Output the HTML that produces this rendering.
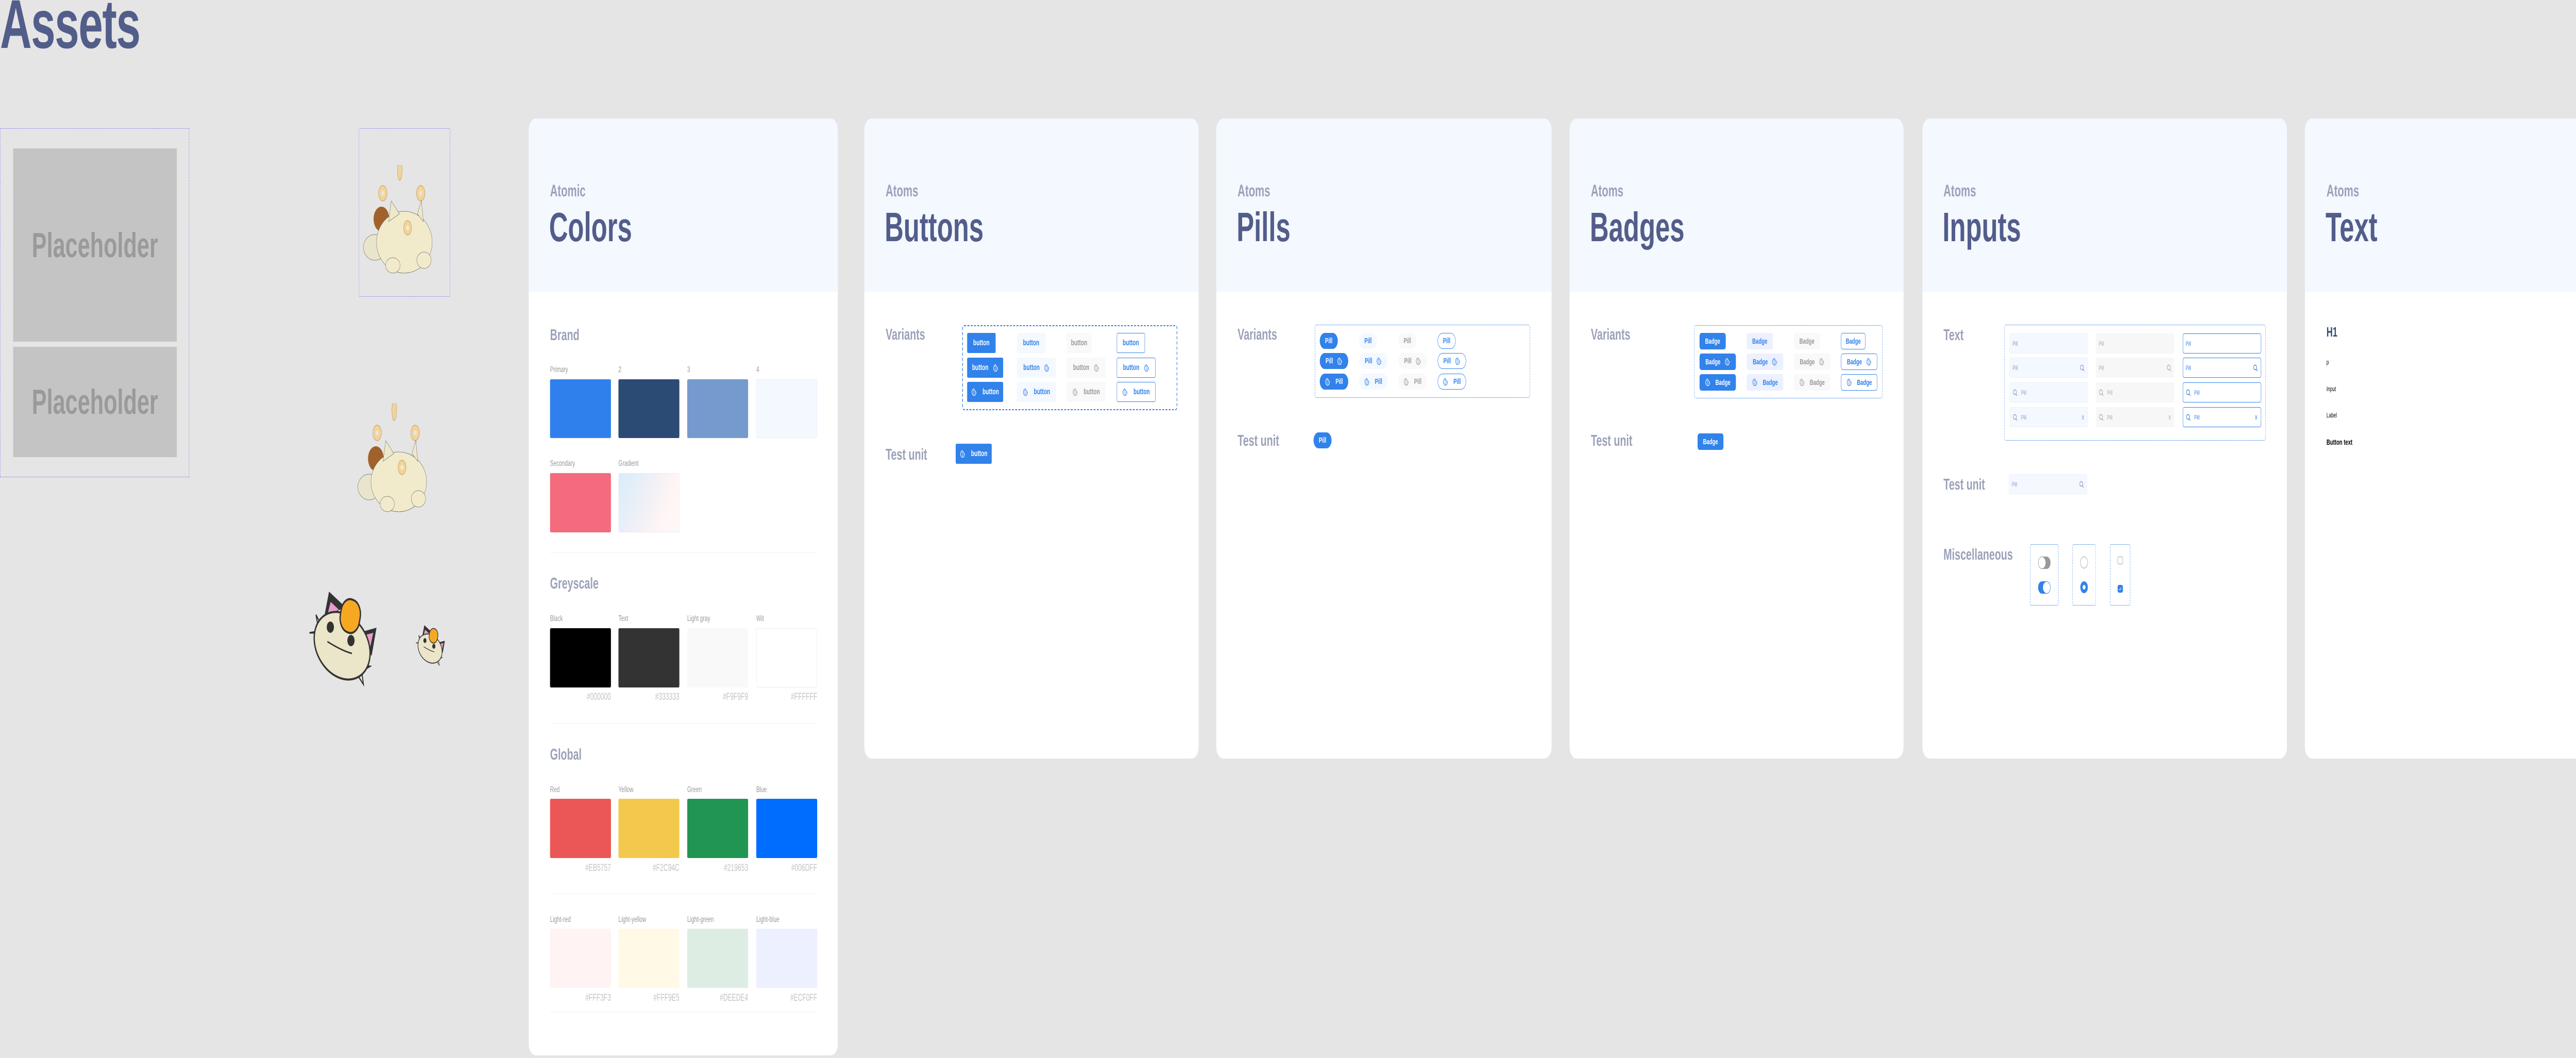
<!DOCTYPE html>
<html><head><meta charset="utf-8">
<style>
*{box-sizing:border-box;margin:0;padding:0}
html,body{margin:0;overflow:hidden;background:#e5e5e5;font-family:"Liberation Sans",Arial,sans-serif}
#root{position:absolute;left:0;top:0;width:7868px;height:2053px;overflow:hidden;transform-origin:0 0}
.a{position:absolute;white-space:nowrap}
.card{position:absolute;top:230px;background:#fff;border-radius:22px;overflow:hidden}
.hd{position:absolute;left:0;top:0;right:0;height:336px;background:#f4f8ff}
.atoms{font-size:32px;font-weight:bold;color:#9ba1b9;line-height:40px;height:40px}
.title{font-size:80px;font-weight:bold;color:#525d8a;line-height:80px}
.sec{font-size:31px;font-weight:bold;color:#9ba1b9;line-height:40px;height:40px}
.lbl{font-size:16px;color:#999;line-height:20px;height:20px}
.hex{font-size:19px;color:#c4c4c4;line-height:22px;height:22px;text-align:right;width:186px}
.sw{position:absolute;width:186px;border-radius:3px}
.div{position:absolute;height:1px;background:#eef0f8;width:816px}
.dash{position:absolute;border:2px dashed #3182ea;border-radius:6px}
.dash1{position:absolute;border:1.5px dashed #3182ea;border-radius:5px}
.b{position:absolute;display:flex;align-items:center;justify-content:center;gap:14px;font-size:16px;font-weight:bold;height:39px;border-radius:3px}
.pl{position:absolute;display:flex;align-items:center;justify-content:center;gap:13px;font-size:15px;font-weight:bold;height:31px;border-radius:16px}
.bd{position:absolute;display:flex;align-items:center;justify-content:center;gap:13px;font-size:15px;font-weight:bold;height:32px;border-radius:6px}
.p{background:#3182ea;color:#fff}
.s{background:#f4f8ff;color:#3182ea}
.sb{background:#ecf0ff;color:#3182ea}
.g{background:#f9f9f9;color:#999}
.o{background:#fff;color:#3182ea;border:1.5px solid #3182ea}
.ck{width:16px;height:16px;flex:none}
.in{position:absolute;width:239px;height:39px;border-radius:4px;display:flex;align-items:center;padding:0 8px;font-size:12px;gap:10px}
.in .sp{flex:1}
.i1{background:#f4f8ff;border:1px solid #e8effd;color:#8b9ac0}
.i2{background:#f7f7f7;color:#aaa}
.i3{background:#fff;border:1.5px solid #3182ea;color:#3182ea}
.ph{position:absolute;background:#c4c4c4;color:#9a9a9a;font-size:68px;font-weight:bold;display:flex;align-items:center;justify-content:center}
</style></head><body><div id="root">
<svg width="0" height="0" style="position:absolute;left:0;top:0">
<defs>
<symbol id="ck" viewBox="0 0 24 24"><path d="M12 2.5a9.5 9.5 0 1 0 9.5 9.5 3 3 0 0 1-3.3-3 3 3 0 0 1-3.2-3.2 3 3 0 0 1-3-3.3z" fill="none" stroke="currentColor" stroke-width="2"/><circle cx="8" cy="9" r="1.4" fill="currentColor"/><circle cx="12" cy="12" r="1.4" fill="currentColor"/><circle cx="8" cy="15" r="1.4" fill="currentColor"/><circle cx="13" cy="17" r="1.4" fill="currentColor"/><circle cx="16.5" cy="14" r="1.2" fill="currentColor"/><circle cx="11" cy="7" r="1.1" fill="currentColor"/></symbol>
<symbol id="sr" viewBox="0 0 24 24"><circle cx="10.5" cy="10.5" r="7" fill="none" stroke="currentColor" stroke-width="2.2"/><path d="M15.5 15.5l5 5" stroke="currentColor" stroke-width="2.4" stroke-linecap="round"/></symbol>
<symbol id="xx" viewBox="0 0 24 24"><path d="M6 4l12 16M18 4L6 20" stroke="currentColor" stroke-width="2.2" fill="none"/></symbol>
</defs></svg>

<div class="a" style="left:0;top:-19px;font-size:134px;font-weight:bold;color:#525d8a;line-height:134px;letter-spacing:-2px">Assets</div>

<div class="a" style="left:0;top:249px;width:578px;height:677px;border:1px dashed #8a7cf0"></div>
<div class="ph" style="left:40px;top:288px;width:500px;height:375px">Placeholder</div>
<div class="ph" style="left:40px;top:673px;width:500px;height:214px">Placeholder</div>

<div class="a" style="left:1096px;top:249px;width:279px;height:327px;border:1px dashed #8a7cf0;border-radius:3px"></div>

<svg class="a" style="left:1105px;top:320px" width="240" height="215" viewBox="0 0 240 215">
<ellipse cx="116" cy="10" rx="7" ry="20" fill="#f1d49a" stroke="#b99552"/><ellipse cx="64" cy="55" rx="13" ry="15" fill="#f3d398" stroke="#b99552"/><circle cx="64" cy="55" r="5" fill="#e5e5e5"/><ellipse cx="180" cy="55" rx="13" ry="15" fill="#f3d398" stroke="#b99552"/><circle cx="180" cy="55" r="5" fill="#e5e5e5"/>
<circle cx="60" cy="105" r="24" fill="#a0622a"/>
<ellipse cx="40" cy="160" rx="35" ry="25" fill="#e9e4cc" stroke="#666" stroke-width=".8"/>
<ellipse cx="130" cy="150" rx="85" ry="60" fill="#f1ebcc" stroke="#666" stroke-width=".8"/>
<path d="M82 110 L90 70 L115 95Z M170 95 L182 70 L188 110Z" fill="#efe8c8" stroke="#666" stroke-width=".8"/>
<ellipse cx="140" cy="122" rx="12" ry="14" fill="#f3d398" stroke="#b99552"/><circle cx="140" cy="122" r="5" fill="#f1ebcc"/>
<ellipse cx="95" cy="195" rx="22" ry="15" fill="#f1ebcc" stroke="#666" stroke-width=".8"/><ellipse cx="190" cy="185" rx="22" ry="16" fill="#f1ebcc" stroke="#666" stroke-width=".8"/>
</svg>
<svg class="a" style="left:1088px;top:782px" width="240" height="215" viewBox="0 0 240 215">
<ellipse cx="116" cy="14" rx="7" ry="20" fill="#f1d49a" stroke="#b99552"/><ellipse cx="64" cy="58" rx="13" ry="15" fill="#f3d398" stroke="#b99552"/><circle cx="64" cy="58" r="5" fill="#e5e5e5"/><ellipse cx="180" cy="58" rx="13" ry="15" fill="#f3d398" stroke="#b99552"/><circle cx="180" cy="58" r="5" fill="#e5e5e5"/>
<circle cx="60" cy="108" r="24" fill="#a0622a"/>
<ellipse cx="40" cy="163" rx="35" ry="25" fill="#e9e4cc" stroke="#666" stroke-width=".8"/>
<ellipse cx="130" cy="153" rx="85" ry="58" fill="#f1ebcc" stroke="#666" stroke-width=".8"/>
<path d="M82 113 L90 73 L115 98Z M170 98 L182 73 L188 113Z" fill="#efe8c8" stroke="#666" stroke-width=".8"/>
<ellipse cx="140" cy="125" rx="12" ry="14" fill="#f3d398" stroke="#b99552"/><circle cx="140" cy="125" r="5" fill="#f1ebcc"/>
<ellipse cx="95" cy="196" rx="22" ry="15" fill="#f1ebcc" stroke="#666" stroke-width=".8"/><ellipse cx="190" cy="186" rx="22" ry="16" fill="#f1ebcc" stroke="#666" stroke-width=".8"/>
</svg>
<svg class="a" style="left:945px;top:1143px" width="212" height="190" viewBox="0 0 212 190">
<path d="M45 55 L60 5 L110 35Z" fill="#333"/><path d="M150 85 L205 75 L190 130Z" fill="#333"/>
<path d="M55 50 L65 25 L90 40Z" fill="#e89ccb"/><path d="M165 90 L195 85 L185 115Z" fill="#e89ccb"/>
<path d="M0 85 L30 85 L20 50 L45 80Z M150 145 L185 150 L160 160 L165 185 L140 160Z" fill="#e9e3c6" stroke="#333" stroke-width="3"/>
<ellipse cx="100" cy="110" rx="88" ry="62" transform="rotate(20 100 110)" fill="#ebe5c9" stroke="#333" stroke-width="4"/>
<rect x="95" y="20" width="60" height="65" rx="28" transform="rotate(15 125 52)" fill="#f7a823" stroke="#333" stroke-width="4"/>
<circle cx="64" cy="74" r="11" fill="#333"/><circle cx="127" cy="100" r="11" fill="#333"/>
<path d="M55 102 Q100 120 130 125" fill="none" stroke="#333" stroke-width="3"/>
</svg>
<svg class="a" style="left:1264px;top:1211px" width="104" height="82" viewBox="0 0 212 190">
<path d="M45 55 L60 5 L110 35Z" fill="#333"/><path d="M150 85 L205 75 L190 130Z" fill="#333"/>
<path d="M55 50 L65 25 L90 40Z" fill="#e89ccb"/><path d="M165 90 L195 85 L185 115Z" fill="#e89ccb"/>
<path d="M0 85 L30 85 L20 50 L45 80Z M150 145 L185 150 L160 160 L165 185 L140 160Z" fill="#e9e3c6" stroke="#333" stroke-width="3"/>
<ellipse cx="100" cy="110" rx="88" ry="62" transform="rotate(20 100 110)" fill="#ebe5c9" stroke="#333" stroke-width="4"/>
<rect x="95" y="20" width="60" height="65" rx="28" transform="rotate(15 125 52)" fill="#f7a823" stroke="#333" stroke-width="4"/>
<circle cx="64" cy="74" r="11" fill="#333"/><circle cx="127" cy="100" r="11" fill="#333"/>
<path d="M55 102 Q100 120 130 125" fill="none" stroke="#333" stroke-width="3"/>
</svg>

<!-- Colors -->
<div class="card" style="left:1615px;width:944px;height:1818px"><div class="hd"></div></div>
<div class="a atoms" style="left:1680px;top:350px">Atomic</div>
<div class="a title" style="left:1677px;top:401px">Colors</div>
<div class="a sec" style="left:1680px;top:630px">Brand</div>
<div class="a lbl" style="left:1680px;top:708px">Primary</div>
<div class="a lbl" style="left:1889px;top:708px">2</div>
<div class="a lbl" style="left:2099px;top:708px">3</div>
<div class="a lbl" style="left:2310px;top:708px">4</div>
<div class="sw" style="left:1680px;top:736px;height:114px;background:#2f80ed"></div>
<div class="sw" style="left:1889px;top:736px;height:114px;background:#2b4a74"></div>
<div class="sw" style="left:2099px;top:736px;height:114px;background:#759acd"></div>
<div class="sw" style="left:2310px;top:736px;height:114px;background:#f4f8ff;border:1.5px solid #eaecf0"></div>
<div class="a lbl" style="left:1680px;top:890px">Secondary</div>
<div class="a lbl" style="left:1889px;top:890px">Gradient</div>
<div class="sw" style="left:1680px;top:918px;height:115px;background:#f46b7d"></div>
<div class="sw" style="left:1889px;top:918px;height:115px;background:linear-gradient(120deg,#d7edfb 0%,#f0f0f6 45%,#fff5f5 75%,#fff8f8 100%);border:1.5px solid #eaecf0"></div>
<div class="div" style="left:1680px;top:1072px"></div>
<div class="a sec" style="left:1680px;top:1112px">Greyscale</div>
<div class="a lbl" style="left:1680px;top:1191px">Black</div>
<div class="a lbl" style="left:1889px;top:1191px">Text</div>
<div class="a lbl" style="left:2099px;top:1191px">Light gray</div>
<div class="a lbl" style="left:2310px;top:1191px">Wit</div>
<div class="sw" style="left:1680px;top:1219px;height:115px;background:#000"></div>
<div class="sw" style="left:1889px;top:1219px;height:115px;background:#333"></div>
<div class="sw" style="left:2099px;top:1219px;height:115px;background:#f9f9f9"></div>
<div class="sw" style="left:2310px;top:1219px;height:115px;background:#fff;border:1.5px solid #eaeaea"></div>
<div class="a hex" style="left:1680px;top:1342px">#000000</div>
<div class="a hex" style="left:1889px;top:1342px">#333333</div>
<div class="a hex" style="left:2099px;top:1342px">#F9F9F9</div>
<div class="a hex" style="left:2310px;top:1342px">#FFFFFF</div>
<div class="div" style="left:1680px;top:1403px"></div>
<div class="a sec" style="left:1680px;top:1444px">Global</div>
<div class="a lbl" style="left:1680px;top:1523px">Red</div>
<div class="a lbl" style="left:1889px;top:1523px">Yellow</div>
<div class="a lbl" style="left:2099px;top:1523px">Green</div>
<div class="a lbl" style="left:2310px;top:1523px">Blue</div>
<div class="sw" style="left:1680px;top:1550px;height:115px;background:#eb5757"></div>
<div class="sw" style="left:1889px;top:1550px;height:115px;background:#f2c94c"></div>
<div class="sw" style="left:2099px;top:1550px;height:115px;background:#219653"></div>
<div class="sw" style="left:2310px;top:1550px;height:115px;background:#006dff"></div>
<div class="a hex" style="left:1680px;top:1674px">#EB5757</div>
<div class="a hex" style="left:1889px;top:1674px">#F2C94C</div>
<div class="a hex" style="left:2099px;top:1674px">#219653</div>
<div class="a hex" style="left:2310px;top:1674px">#006DFF</div>
<div class="div" style="left:1680px;top:1734px"></div>
<div class="a lbl" style="left:1680px;top:1775px">Light-red</div>
<div class="a lbl" style="left:1889px;top:1775px">Light-yellow</div>
<div class="a lbl" style="left:2099px;top:1775px">Light-green</div>
<div class="a lbl" style="left:2310px;top:1775px">Light-blue</div>
<div class="sw" style="left:1680px;top:1802px;height:115px;background:#fff3f3"></div>
<div class="sw" style="left:1889px;top:1802px;height:115px;background:#fff9e5"></div>
<div class="sw" style="left:2099px;top:1802px;height:115px;background:#deede4"></div>
<div class="sw" style="left:2310px;top:1802px;height:115px;background:#ecf0ff"></div>
<div class="a hex" style="left:1680px;top:1926px">#FFF3F3</div>
<div class="a hex" style="left:1889px;top:1926px">#FFF9E5</div>
<div class="a hex" style="left:2099px;top:1926px">#DEEDE4</div>
<div class="a hex" style="left:2310px;top:1926px">#ECF0FF</div>
<div class="div" style="left:1680px;top:1963px"></div>

<!-- Buttons -->
<div class="card" style="left:2640px;width:1021px;height:1242px"><div class="hd"></div></div>
<div class="a atoms" style="left:2705px;top:350px">Atoms</div>
<div class="a title" style="left:2702px;top:401px">Buttons</div>
<div class="a sec" style="left:2705px;top:629px">Variants</div>
<div class="dash" style="left:2939px;top:631px;width:657px;height:165px"></div>
<div class="b p" style="left:2954px;top:646px;width:87px">button</div>
<div class="b s" style="left:3106px;top:646px;width:87px">button</div>
<div class="b g" style="left:3258px;top:646px;width:76px">button</div>
<div class="b o" style="left:3411px;top:646px;width:86px">button</div>
<div class="b p" style="left:2954px;top:694px;width:110px"><span>button</span><svg class="ck"><use href="#ck"/></svg></div>
<div class="b s" style="left:3106px;top:694px;width:119px"><span>button</span><svg class="ck"><use href="#ck"/></svg></div>
<div class="b g" style="left:3258px;top:694px;width:119px"><span>button</span><svg class="ck"><use href="#ck"/></svg></div>
<div class="b o" style="left:3411px;top:694px;width:118px"><span>button</span><svg class="ck"><use href="#ck"/></svg></div>
<div class="b p" style="left:2954px;top:741px;width:110px;gap:18px"><svg class="ck"><use href="#ck"/></svg><span>button</span></div>
<div class="b s" style="left:3106px;top:741px;width:119px;gap:18px"><svg class="ck"><use href="#ck"/></svg><span>button</span></div>
<div class="b g" style="left:3258px;top:741px;width:119px;gap:18px"><svg class="ck"><use href="#ck"/></svg><span>button</span></div>
<div class="b o" style="left:3411px;top:741px;width:118px;gap:18px"><svg class="ck"><use href="#ck"/></svg><span>button</span></div>
<div class="a sec" style="left:2705px;top:862px">Test unit</div>
<div class="b p" style="left:2919px;top:861px;width:110px;gap:18px"><svg class="ck"><use href="#ck"/></svg><span>button</span></div>

<!-- Pills -->
<div class="card" style="left:3715px;width:1024px;height:1242px"><div class="hd"></div></div>
<div class="a atoms" style="left:3780px;top:350px">Atoms</div>
<div class="a title" style="left:3777px;top:401px">Pills</div>
<div class="a sec" style="left:3780px;top:629px">Variants</div>
<div class="dash1" style="left:4016px;top:630px;width:657px;height:142px"></div>
<div class="pl p" style="left:4031px;top:646px;width:55px">Pill</div>
<div class="pl s" style="left:4151px;top:646px;width:55px">Pill</div>
<div class="pl g" style="left:4271px;top:646px;width:55px">Pill</div>
<div class="pl o" style="left:4391px;top:646px;width:55px">Pill</div>
<div class="pl p" style="left:4031px;top:685px;width:87px"><span>Pill</span><svg class="ck"><use href="#ck"/></svg></div>
<div class="pl s" style="left:4151px;top:685px;width:87px"><span>Pill</span><svg class="ck"><use href="#ck"/></svg></div>
<div class="pl g" style="left:4271px;top:685px;width:87px"><span>Pill</span><svg class="ck"><use href="#ck"/></svg></div>
<div class="pl o" style="left:4391px;top:685px;width:87px"><span>Pill</span><svg class="ck"><use href="#ck"/></svg></div>
<div class="pl p" style="left:4031px;top:725px;width:87px;gap:16px"><svg class="ck"><use href="#ck"/></svg><span>Pill</span></div>
<div class="pl s" style="left:4151px;top:725px;width:87px;gap:16px"><svg class="ck"><use href="#ck"/></svg><span>Pill</span></div>
<div class="pl g" style="left:4271px;top:725px;width:87px;gap:16px"><svg class="ck"><use href="#ck"/></svg><span>Pill</span></div>
<div class="pl o" style="left:4391px;top:725px;width:87px;gap:16px"><svg class="ck"><use href="#ck"/></svg><span>Pill</span></div>
<div class="a sec" style="left:3780px;top:835px">Test unit</div>
<div class="pl p" style="left:4012px;top:839px;width:55px">Pill</div>

<!-- Badges -->
<div class="card" style="left:4794px;width:1020px;height:1242px"><div class="hd"></div></div>
<div class="a atoms" style="left:4859px;top:350px">Atoms</div>
<div class="a title" style="left:4856px;top:401px">Badges</div>
<div class="a sec" style="left:4859px;top:629px">Variants</div>
<div class="dash1" style="left:5175px;top:631px;width:575px;height:142px"></div>
<div class="bd p" style="left:5191px;top:646px;width:80px">Badge</div>
<div class="bd sb" style="left:5335px;top:646px;width:80px">Badge</div>
<div class="bd g" style="left:5479px;top:646px;width:80px">Badge</div>
<div class="bd o" style="left:5623px;top:646px;width:75px">Badge</div>
<div class="bd p" style="left:5191px;top:686px;width:111px"><span>Badge</span><svg class="ck"><use href="#ck"/></svg></div>
<div class="bd sb" style="left:5335px;top:686px;width:112px"><span>Badge</span><svg class="ck"><use href="#ck"/></svg></div>
<div class="bd g" style="left:5479px;top:686px;width:111px"><span>Badge</span><svg class="ck"><use href="#ck"/></svg></div>
<div class="bd o" style="left:5623px;top:686px;width:111px"><span>Badge</span><svg class="ck"><use href="#ck"/></svg></div>
<div class="bd p" style="left:5191px;top:726px;width:111px;gap:16px"><svg class="ck"><use href="#ck"/></svg><span>Badge</span></div>
<div class="bd sb" style="left:5335px;top:726px;width:112px;gap:16px"><svg class="ck"><use href="#ck"/></svg><span>Badge</span></div>
<div class="bd g" style="left:5479px;top:726px;width:111px;gap:16px"><svg class="ck"><use href="#ck"/></svg><span>Badge</span></div>
<div class="bd o" style="left:5623px;top:726px;width:111px;gap:16px"><svg class="ck"><use href="#ck"/></svg><span>Badge</span></div>
<div class="a sec" style="left:4859px;top:835px">Test unit</div>
<div class="bd p" style="left:5185px;top:841px;width:79px">Badge</div>

<!-- Inputs -->
<div class="card" style="left:5872px;width:1113px;height:1242px"><div class="hd"></div></div>
<div class="a atoms" style="left:5936px;top:350px">Atoms</div>
<div class="a title" style="left:5933px;top:401px">Inputs</div>
<div class="a sec" style="left:5936px;top:630px">Text</div>
<div class="dash1" style="left:6122px;top:630px;width:798px;height:225px"></div>
<div class="in i1" style="left:6138px;top:647px">Pill</div>
<div class="in i2" style="left:6402px;top:647px">Pill</div>
<div class="in i3" style="left:6667px;top:647px">Pill</div>
<div class="in i1" style="left:6138px;top:694px"><span class="sp">Pill</span><svg class="ck"><use href="#sr"/></svg></div>
<div class="in i2" style="left:6402px;top:694px"><span class="sp">Pill</span><svg class="ck"><use href="#sr"/></svg></div>
<div class="in i3" style="left:6667px;top:694px"><span class="sp">Pill</span><svg class="ck"><use href="#sr"/></svg></div>
<div class="in i1" style="left:6138px;top:742px"><svg class="ck"><use href="#sr"/></svg><span class="sp">Pill</span></div>
<div class="in i2" style="left:6402px;top:742px"><svg class="ck"><use href="#sr"/></svg><span class="sp">Pill</span></div>
<div class="in i3" style="left:6667px;top:742px"><svg class="ck"><use href="#sr"/></svg><span class="sp">Pill</span></div>
<div class="in i1" style="left:6138px;top:790px"><svg class="ck"><use href="#sr"/></svg><span class="sp">Pill</span><svg style="width:12px;height:12px"><use href="#xx"/></svg></div>
<div class="in i2" style="left:6402px;top:790px"><svg class="ck"><use href="#sr"/></svg><span class="sp">Pill</span><svg style="width:12px;height:12px"><use href="#xx"/></svg></div>
<div class="in i3" style="left:6667px;top:790px"><svg class="ck"><use href="#sr"/></svg><span class="sp">Pill</span><svg style="width:12px;height:12px"><use href="#xx"/></svg></div>
<div class="a sec" style="left:5936px;top:920px">Test unit</div>
<div class="in i1" style="left:6136px;top:920px"><span class="sp">Pill</span><svg class="ck"><use href="#sr"/></svg></div>
<div class="a sec" style="left:5936px;top:1056px">Miscellaneous</div>
<div class="dash1" style="left:6201px;top:1056px;width:86px;height:119px;border-radius:3px"></div>
<div class="dash1" style="left:6330px;top:1056px;width:71px;height:119px;border-radius:3px"></div>
<div class="dash1" style="left:6445px;top:1056px;width:62px;height:119px;border-radius:3px"></div>
<div class="a" style="left:6225px;top:1080px;width:38px;height:24px;border-radius:12px;background:#999"></div>
<div class="a" style="left:6225px;top:1080px;width:24px;height:24px;border-radius:12px;background:#fff;border:1.5px solid #999"></div>
<div class="a" style="left:6225px;top:1128px;width:38px;height:24px;border-radius:12px;background:#3182ea"></div>
<div class="a" style="left:6239px;top:1128px;width:24px;height:24px;border-radius:12px;background:#fff;border:1.5px solid #3182ea"></div>
<div class="a" style="left:6354px;top:1080px;width:23px;height:23px;border-radius:50%;border:1.5px solid #999;background:#fff"></div>
<div class="a" style="left:6354px;top:1128px;width:23px;height:23px;border-radius:50%;border:7px solid #3182ea;background:#fff"></div>
<div class="a" style="left:6468px;top:1080px;width:16px;height:15px;border-radius:4px;border:1.5px solid #999;background:#fff"></div>
<div class="a" style="left:6468px;top:1135px;width:16px;height:15px;border-radius:4px;background:#3182ea"></div>
<svg class="a" style="left:6470px;top:1137px" width="12" height="11" viewBox="0 0 12 11"><path d="M3 6l2 2 4-5" stroke="#fff" stroke-width="1.3" fill="none"/></svg>

<!-- Text -->
<div class="card" style="left:7040px;width:828px;height:1242px;border-radius:22px 0 0 22px"><div class="hd"></div></div>
<div class="a atoms" style="left:7106px;top:350px">Atoms</div>
<div class="a title" style="left:7103px;top:401px">Text</div>
<div class="a" style="left:7106px;top:629px;font-size:26px;font-weight:bold;color:#2b4a78;line-height:30px">H1</div>
<div class="a" style="left:7106px;top:694px;font-size:13px;color:#000;line-height:18px">p</div>
<div class="a" style="left:7106px;top:746px;font-size:13px;color:#000;line-height:18px">Input</div>
<div class="a" style="left:7106px;top:797px;font-size:13px;color:#000;line-height:18px">Label</div>
<div class="a" style="left:7106px;top:849px;font-size:15px;font-weight:bold;color:#000;line-height:20px">Button text</div>

</div>
<script>
(function(){
  function fit(){
    var w=window.innerWidth||document.documentElement.clientWidth||7868;
    var h=window.innerHeight||document.documentElement.clientHeight||2053;
    var r=document.getElementById('root');
    var sx=w/7868, sy=h/2053;
    if(Math.abs(sx-1)<0.002 && Math.abs(sy-1)<0.002){r.style.transform='none';return;}
    r.style.transform='scale('+sx+','+sy+')';
  }
  fit();
  window.addEventListener('resize',fit);
})();
</script>
</body></html>
